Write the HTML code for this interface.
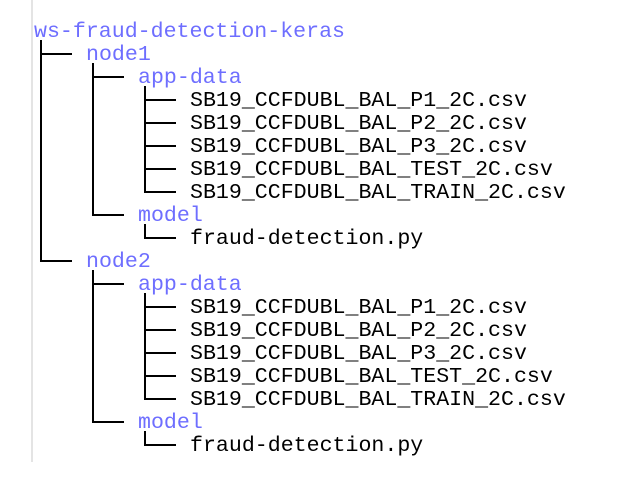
<!DOCTYPE html>
<html><head><style>
body{margin:0;width:620px;height:494px;background:#fff;position:relative;overflow:hidden}
.t{position:absolute;font-family:"Liberation Mono","Courier New",monospace;font-size:21.6px;line-height:23px;white-space:pre;color:#000}
.b{color:#6e6eff}
.l{position:absolute;background:#000}
</style></head><body>
<div style="position:absolute;left:31px;top:0;width:2px;height:462px;background:#e4e4e4"></div>
<div id="c"></div>
<script>
var rows=[[0,"ws-fraud-detection-keras",1],[1,"node1",1],[2,"app-data",1],[3,"SB19_CCFDUBL_BAL_P1_2C.csv"],[3,"SB19_CCFDUBL_BAL_P2_2C.csv"],[3,"SB19_CCFDUBL_BAL_P3_2C.csv"],[3,"SB19_CCFDUBL_BAL_TEST_2C.csv"],[3,"SB19_CCFDUBL_BAL_TRAIN_2C.csv"],[2,"model",1],[3,"fraud-detection.py"],
[1,"node2",1],[2,"app-data",1],[3,"SB19_CCFDUBL_BAL_P1_2C.csv"],[3,"SB19_CCFDUBL_BAL_P2_2C.csv"],[3,"SB19_CCFDUBL_BAL_P3_2C.csv"],[3,"SB19_CCFDUBL_BAL_TEST_2C.csv"],[3,"SB19_CCFDUBL_BAL_TRAIN_2C.csv"],[2,"model",1],[3,"fraud-detection.py"]];
var h="";
function L(x,y,w,hh){h+='<div class="l" style="left:'+x+'px;top:'+y+'px;width:'+w+'px;height:'+hh+'px"></div>';}
rows.forEach(function(r,i){
 var cy=31+23*i, lv=r[0];
 var x=lv==0?34:34+52*lv;
 h+='<div class="t'+(r[2]?' b':'')+'" style="left:'+x+'px;top:'+(cy-10)+'px">'+r[1]+'</div>';
 if(lv>0){
  var vx=40+52*(lv-1);
  L(vx,cy-1,32,2);
  var p=i-1;while(rows[p][0]>=lv)p--;
  var last=true;for(var j=i+1;j<rows.length;j++){if(rows[j][0]<lv)break;if(rows[j][0]==lv){last=false;break;}}
  if(last)L(vx,31+23*p+9,2,cy-(31+23*p+9)+1);
 }
});
document.getElementById('c').innerHTML=h;
</script>
</body></html>
